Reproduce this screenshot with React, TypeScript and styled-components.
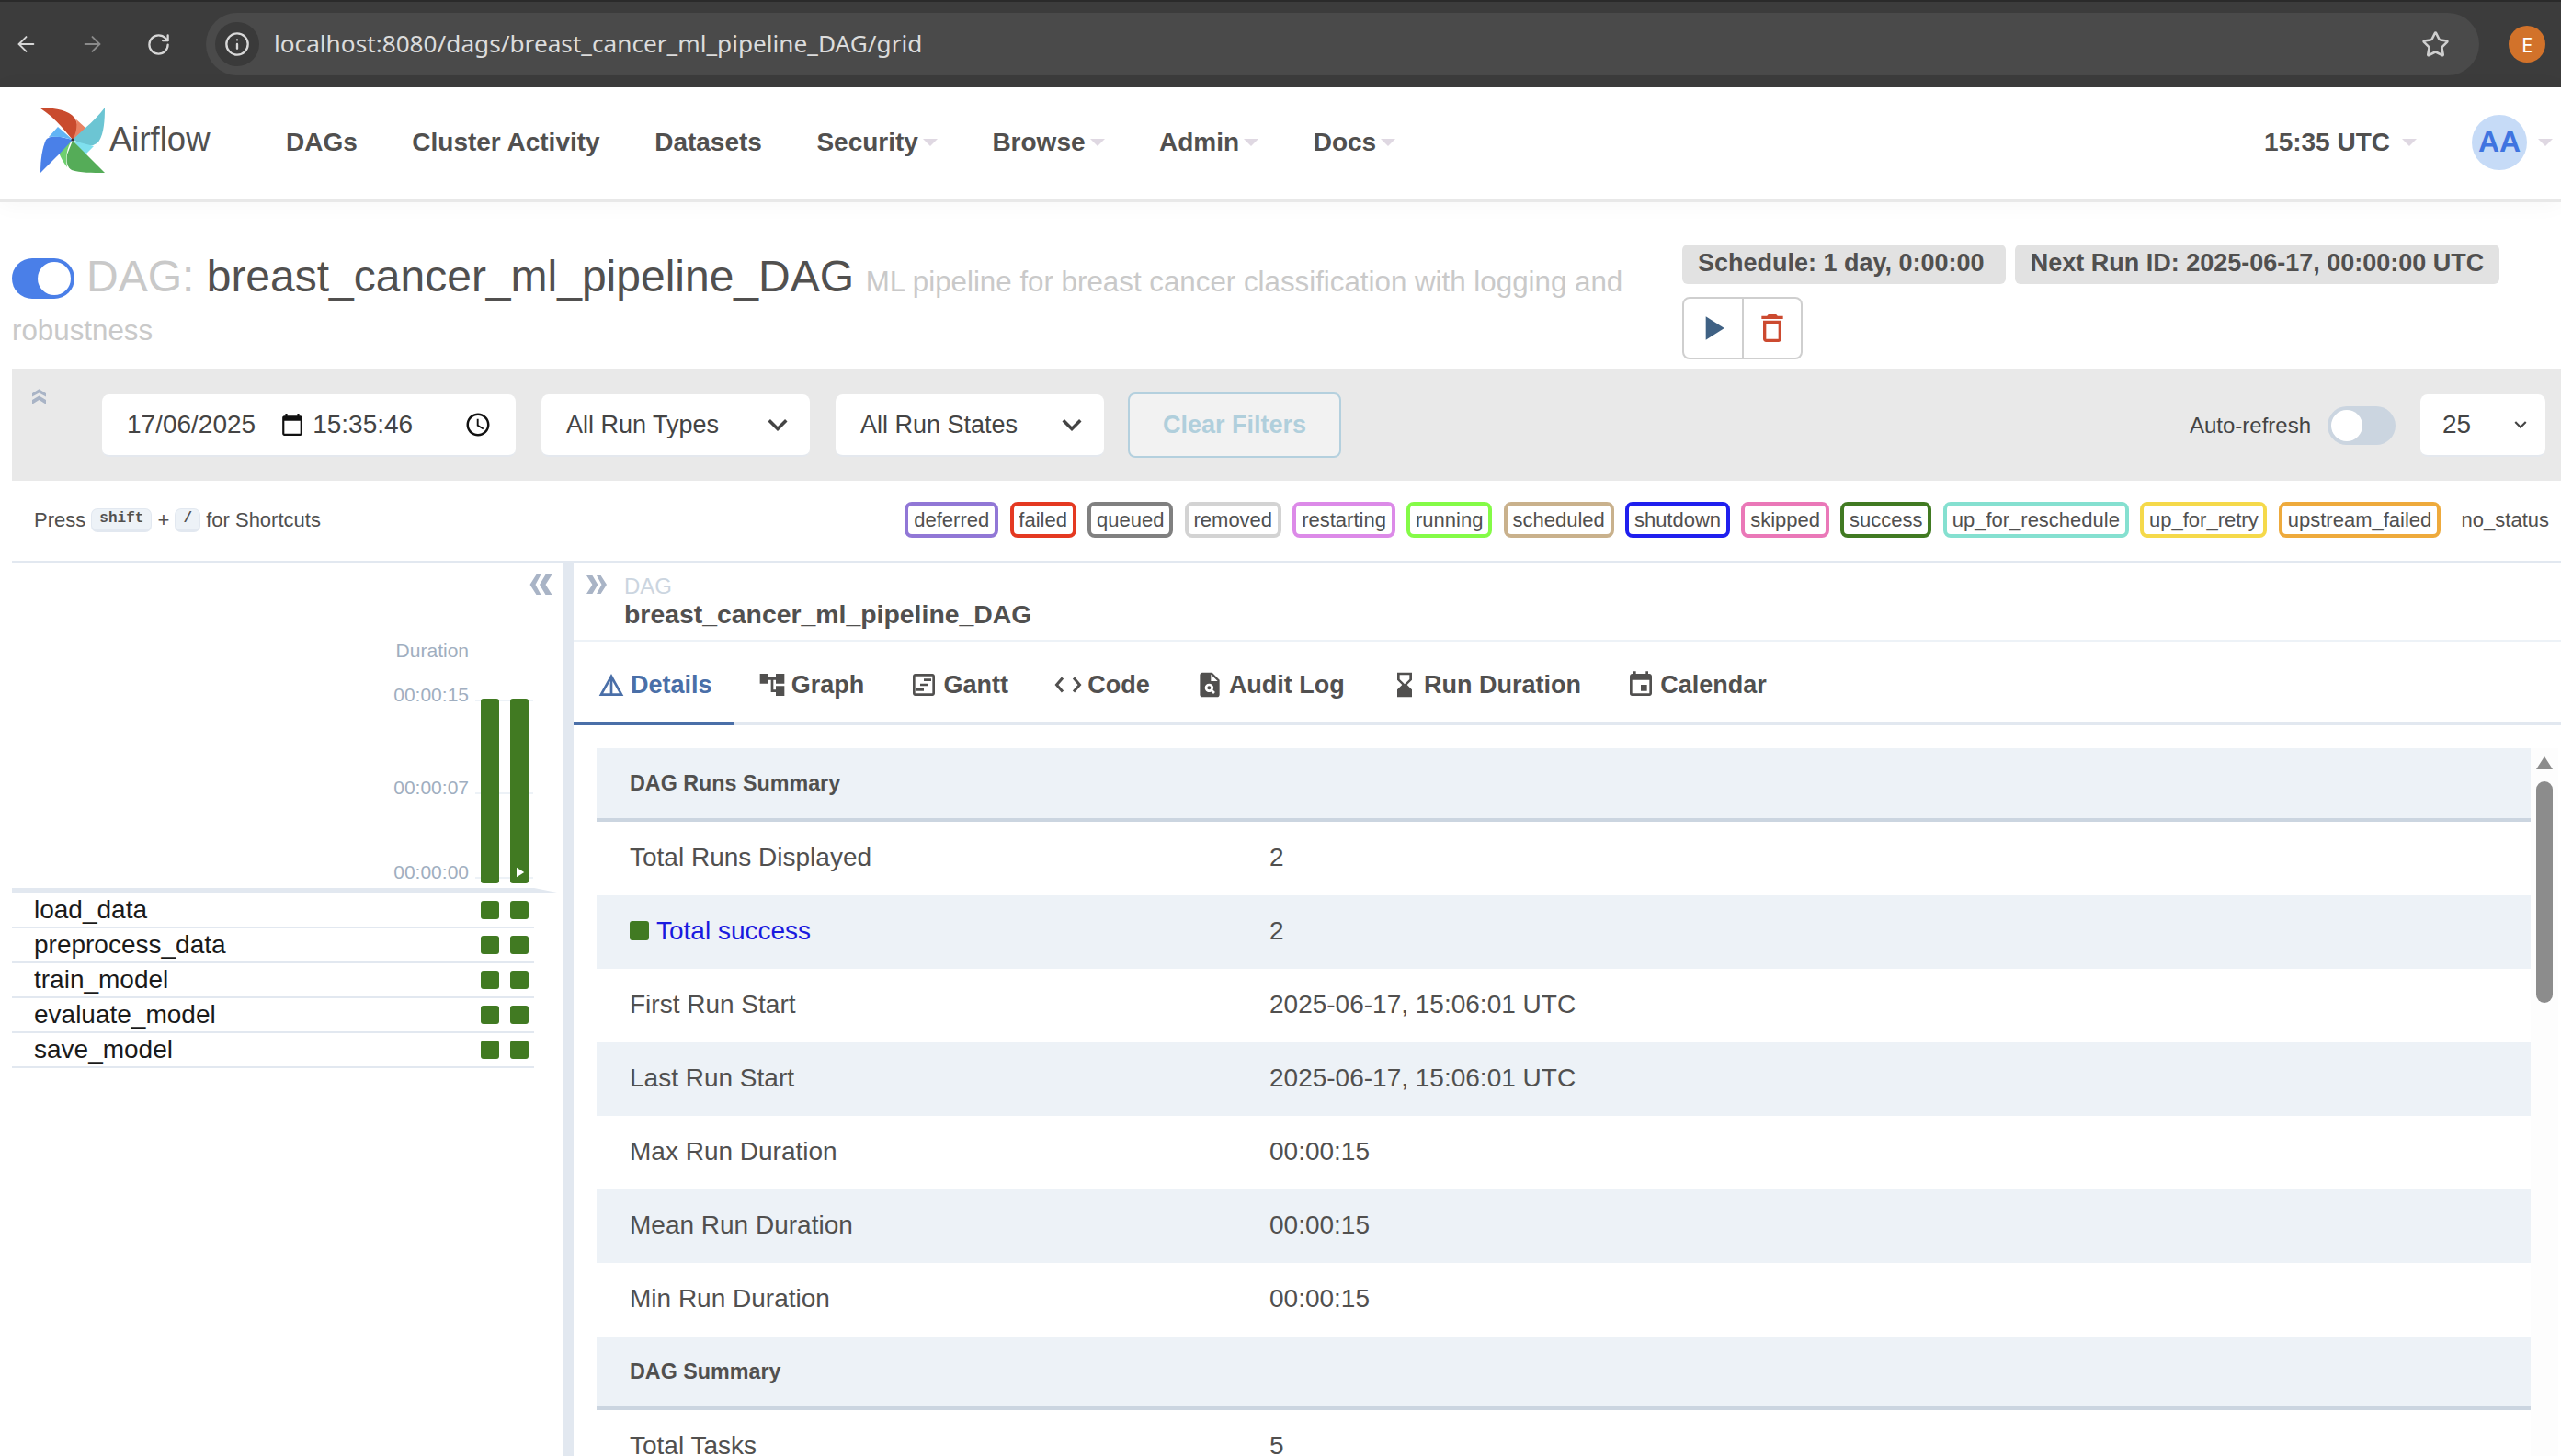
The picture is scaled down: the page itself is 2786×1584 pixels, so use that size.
import React from "react";
import styled, { createGlobalStyle } from "styled-components";
import { ArrowLeft, ArrowRight, Info, RotateCw, Star } from "lucide-react";
import {
  MdAccountTree,
  MdCalendarToday,
  MdDeleteOutline,
  MdDetails,
  MdEvent,
  MdExpandMore,
  MdHourglassBottom,
  MdOutlineAccessTime,
  MdOutlineViewTimeline,
  MdPlagiarism,
  MdPlayArrow,
} from "react-icons/md";

const navItems = [
  { label: "DAGs" },
  { label: "Cluster Activity" },
  { label: "Datasets" },
  { label: "Security", menu: true },
  { label: "Browse", menu: true },
  { label: "Admin", menu: true },
  { label: "Docs", menu: true },
];

const legend = [
  ["deferred", "#9177d6"],
  ["failed", "#e43921"],
  ["queued", "#808080"],
  ["removed", "#d3d3d3"],
  ["restarting", "#dc8ae8"],
  ["running", "#84fb47"],
  ["scheduled", "#c9b18c"],
  ["shutdown", "#1f1fee"],
  ["skipped", "#ea78b8"],
  ["success", "#417a22"],
  ["up_for_reschedule", "#85e0d0"],
  ["up_for_retry", "#f5d94a"],
  ["upstream_failed", "#eeaa3c"],
];

const tasks = ["load_data", "preprocess_data", "train_model", "evaluate_model", "save_model"];

const CodeIcon = () => (
  <svg width="32" height="32" viewBox="0 0 32 32" fill="none" stroke="currentColor" strokeWidth="3">
    <path d="M10 8.500 3.500 16l6.500 7.500" />
    <path d="M22 8.500 28.500 16 22 23.500" />
  </svg>
);

const tabs = [
  { label: "Details", icon: <MdDetails size={32} />, active: true },
  { label: "Graph", icon: <MdAccountTree size={32} /> },
  { label: "Gantt", icon: <MdOutlineViewTimeline size={32} /> },
  { label: "Code", icon: <CodeIcon /> },
  { label: "Audit Log", icon: <MdPlagiarism size={32} /> },
  { label: "Run Duration", icon: <MdHourglassBottom size={32} /> },
  { label: "Calendar", icon: <MdEvent size={32} /> },
];

const runRows = [
  ["Total Runs Displayed", "2"],
  ["Total success", "2"],
  ["First Run Start", "2025-06-17, 15:06:01 UTC"],
  ["Last Run Start", "2025-06-17, 15:06:01 UTC"],
  ["Max Run Duration", "00:00:15"],
  ["Mean Run Duration", "00:00:15"],
  ["Min Run Duration", "00:00:15"],
];

const AirflowLogo = () => (
  <svg width="71" height="71" viewBox="13 10 71 71">
    <path d="M13.5 10.5C28 10 44 12 51 21c4 6 4 13 3 18l-5 6-12-14C30 23 22 16 13.5 10.5Z" fill="#c94b2e" />
    <path d="M53 23l11 10-15 12c4-7 5-14 4-22Z" fill="#e88263" />
    <path d="M84 10c0 14-1 28-6 36-4 6-11 6-16 5l-13-6 14-13C70 26 78 18 84 10Z" fill="#6cc5d3" />
    <path d="M49 46l23 6-9 9C58 56 53 50 49 46Z" fill="#7fe0ee" />
    <path d="M84 81c-14 0-27 0-36-3-5-3-6-9-5-17l6-15 14 14c7 7 14 14 21 21Z" fill="#55ac58" />
    <path d="M34 59l10-10 4-3c-5 8-7 17-5 29-4-5-7-11-9-16Z" fill="#6fcf6f" />
    <path d="M14 81c0-15 2-27 6-36 3-4 10-4 16-3l13 3-14 15C27 68 20 75 14 81Z" fill="#4a80e8" />
    <path d="M23 42l10-11 16 14c-9-3-17-4-26-3Z" fill="#62b4f5" />
    <circle cx="49" cy="45" r="1.6" fill="#333" />
  </svg>
);

// double chevron pointing left, turned for the other directions
const DoubleChevron = ({ width, height, turn }: { width: number; height: number; turn: number }) => (
  <svg width={width} height={height} viewBox="0 0 24 22" style={{ transform: `rotate(${turn}deg)` }}>
    <path d="M12 0H7L0 11l7 11h5L6 11Z" fill="currentColor" />
    <path d="M24 0h-7l-6.500 11L17 22h7l-7-11Z" fill="currentColor" />
  </svg>
);

const App = () => {
  return (
    <Page>
      <GlobalStyle />
      <BrowserBar>
        <BrowserIcon $dim={false}><ArrowLeft size={36} strokeWidth={1.7} /></BrowserIcon>
        <BrowserIcon $dim><ArrowRight size={36} strokeWidth={1.7} /></BrowserIcon>
        <BrowserIcon $dim={false}><RotateCw size={29} /></BrowserIcon>
        <UrlPill>
          <InfoBadge><Info size={28} /></InfoBadge>
          <UrlText>localhost:8080/dags/breast_cancer_ml_pipeline_DAG/grid</UrlText>
          <Star size={31} color="#cfcfcf" strokeWidth={2} />
        </UrlPill>
        <ProfileDot>E</ProfileDot>
      </BrowserBar>

      <NavBar>
        <Brand>
          <AirflowLogo />
          <BrandName>Airflow</BrandName>
        </Brand>
        <NavList>
          {navItems.map((item) => (
            <NavItem key={item.label}>
              {item.label}
              {item.menu && <Caret />}
            </NavItem>
          ))}
        </NavList>
        <NavRight>
          <NavClock>
            15:35 UTC
            <Caret />
          </NavClock>
          <UserDot>AA</UserDot>
          <Caret />
        </NavRight>
      </NavBar>

      <TitleArea>
        <Title>
          <PauseToggle />
          <DagPrefix>DAG: </DagPrefix>
          <DagName>breast_cancer_ml_pipeline_DAG</DagName>{" "}
          <DagDescription>ML pipeline for breast cancer classification with logging and robustness</DagDescription>
        </Title>
        <TitleSide>
          <BadgeRow>
            <InfoChip>Schedule: 1 day, 0:00:00</InfoChip>
            <InfoChip>Next Run ID: 2025-06-17, 00:00:00 UTC</InfoChip>
          </BadgeRow>
          <ButtonGroup>
            <ActionButton $color="#3f6184"><MdPlayArrow size={44} /></ActionButton>
            <ActionButton $color="#cc4a30"><MdDeleteOutline size={40} /></ActionButton>
          </ButtonGroup>
        </TitleSide>
      </TitleArea>

      <FilterBar>
        <CollapseUp><DoubleChevron width={17} height={15} turn={90} /></CollapseUp>
        <DateField>
          <span>17/06/2025</span>
          <MdCalendarToday size={26} color="#111" />
          <span>15:35:46</span>
          <ClockSlot><MdOutlineAccessTime size={30} color="#111" /></ClockSlot>
        </DateField>
        <SelectField>
          All Run Types
          <MdExpandMore size={42} color="#444" />
        </SelectField>
        <SelectField>
          All Run States
          <MdExpandMore size={42} color="#444" />
        </SelectField>
        <ClearButton>Clear Filters</ClearButton>
        <RefreshGroup>
          <RefreshLabel>Auto-refresh</RefreshLabel>
          <RefreshToggle><ToggleKnob /></RefreshToggle>
          <PageSize>
            25
            <MdExpandMore size={26} color="#444" />
          </PageSize>
        </RefreshGroup>
      </FilterBar>

      <LegendRow>
        <Shortcuts>
          Press <Kbd>shift</Kbd> + <Kbd>/</Kbd> for Shortcuts
        </Shortcuts>
        <LegendList>
          {legend.map(([name, color]) => (
            <LegendBadge key={name} $color={color}>{name}</LegendBadge>
          ))}
          <NoStatus>no_status</NoStatus>
        </LegendList>
      </LegendRow>

      <Main>
        <GridPanel>
          <PanelTop><DoubleChevron width={25} height={22} turn={0} /></PanelTop>
          <DurationLabel>Duration</DurationLabel>
          <Chart>
            <TickRow $gap={0}><TickLabel>00:00:15</TickLabel><TickLine /></TickRow>
            <TickRow $gap={75}><TickLabel>00:00:07</TickLabel><TickLine /></TickRow>
            <TickRow $gap={66}><TickLabel>00:00:00</TickLabel><TickLine /></TickRow>
            <Bars>
              <Bar />
              <Bar><MdPlayArrow size={18} color="#fff" /></Bar>
            </Bars>
          </Chart>
          <ChartFloor />
          {tasks.map((task) => (
            <TaskRow key={task}>
              {task}
              <TaskCells>
                <TaskCell />
                <TaskCell />
              </TaskCells>
            </TaskRow>
          ))}
        </GridPanel>
        <Divider />
        <DetailPanel>
          <Crumbs>
            <ExpandIcon><DoubleChevron width={22} height={22} turn={180} /></ExpandIcon>
            <CrumbText>
              <CrumbLabel>DAG</CrumbLabel>
              <CrumbValue>breast_cancer_ml_pipeline_DAG</CrumbValue>
            </CrumbText>
          </Crumbs>
          <TabStrip>
            {tabs.map((tab) => (
              <Tab key={tab.label} $active={!!tab.active}>
                {tab.icon}
                {tab.label}
              </Tab>
            ))}
          </TabStrip>
          <DetailBody>
            <SummaryTable>
              <SectionHead>DAG Runs Summary</SectionHead>
              {runRows.map(([label, value], i) => (
                <SummaryRow key={label} $shaded={i % 2 === 1}>
                  {label === "Total success" ? (
                    <SuccessLink><SuccessSquare />{label}</SuccessLink>
                  ) : (
                    <span>{label}</span>
                  )}
                  <span>{value}</span>
                </SummaryRow>
              ))}
              <SectionHead>DAG Summary</SectionHead>
              <SummaryRow $shaded={false}>
                <span>Total Tasks</span>
                <span>5</span>
              </SummaryRow>
            </SummaryTable>
            <ScrollTrack>
              <ScrollArrow />
              <ScrollThumb />
            </ScrollTrack>
          </DetailBody>
        </DetailPanel>
      </Main>
    </Page>
  );
};

export default App;

const GlobalStyle = createGlobalStyle`
  html, body {
    margin: 0;
    height: 100%;
    overflow: hidden;
    background: #fff;
    font-family: "Liberation Sans", Arial, sans-serif;
    color: #51504f;
  }
  * { box-sizing: border-box; }
`;

const Page = styled.div`
  display: flex;
  flex-direction: column;
  width: 2786px;
  height: 1584px;
  overflow: hidden;
`;

const BrowserBar = styled.div`
  display: flex;
  align-items: center;
  flex: none;
  height: 95px;
  padding: 0 17px 1px 15px;
  background: #3c3c3c;
  border-top: 2px solid #2a2a2a;
`;

const BrowserIcon = styled.div<{ $dim: boolean }>`
  display: flex;
  justify-content: center;
  width: 27px;
  margin-right: 45px;
  color: ${(p) => (p.$dim ? "#8a8a8a" : "#d6d6d6")};
`;

const UrlPill = styled.div`
  display: flex;
  align-items: center;
  width: 2478px;
  height: 68px;
  margin-left: -7px;
  padding: 0 32px 0 10px;
  border-radius: 34px;
  background: #4a4a4a;
  color: #d8d8d8;
`;

const InfoBadge = styled.div`
  display: flex;
  align-items: center;
  justify-content: center;
  flex: none;
  width: 48px;
  height: 48px;
  border-radius: 50%;
  background: #3a3a3a;
`;

const UrlText = styled.div`
  flex: 1;
  margin: -2px 0 0 16px;
  font-family: "Noto Sans", sans-serif;
  font-size: 26.2px;
  color: #dcdcdc;
`;

const ProfileDot = styled.div`
  display: flex;
  align-items: center;
  justify-content: center;
  width: 40px;
  height: 40px;
  margin-left: 32px;
  border-radius: 50%;
  background: #d2722a;
  color: #fff;
  font-family: "Noto Sans", sans-serif;
  font-size: 22px;
`;

const NavBar = styled.header`
  display: flex;
  align-items: center;
  flex: none;
  height: 125px;
  padding: 0 9px 3px 43px;
  background: #fff;
  border-bottom: 3px solid #e8e8e8;
  box-shadow: 0 2px 24px rgba(0, 0, 0, 0.04);
`;

const Brand = styled.div`
  display: flex;
  align-items: center;
  width: 268px;
  margin-top: -5px;
`;

const BrandName = styled.span`
  margin-left: 5px;
  font-size: 36.5px;
  color: #51504f;
`;

const NavList = styled.nav`
  display: flex;
  align-items: center;
  gap: 59.5px;
`;

const NavItem = styled.span`
  display: flex;
  align-items: center;
  font-size: 28px;
  font-weight: 700;
  color: #51504f;
`;

const Caret = styled.i`
  display: inline-block;
  width: 0;
  height: 0;
  margin-left: 5px;
  border-top: 8px solid #dfd8e2;
  border-left: 8px solid transparent;
  border-right: 8px solid transparent;
`;

const NavRight = styled.div`
  display: flex;
  align-items: center;
  margin-left: auto;
`;

const NavClock = styled.span`
  display: flex;
  align-items: center;
  gap: 8px;
  font-size: 28px;
  font-weight: 700;
`;

const UserDot = styled.div`
  display: flex;
  align-items: center;
  justify-content: center;
  width: 60px;
  height: 60px;
  margin: 0 7px 0 60px;
  border-radius: 50%;
  background: #c6dbf7;
  color: #3f74e0;
  font-size: 32px;
  font-weight: 700;
`;

const TitleArea = styled.section`
  display: flex;
  flex: none;
  height: 181px;
  padding-left: 13px;
`;

const Title = styled.h1`
  width: 1790px;
  margin: 54px 27px 0 0;
  font-size: 31.3px;
  font-weight: 400;
  line-height: 53px;
`;

const PauseToggle = styled.span`
  display: inline-block;
  position: relative;
  width: 68px;
  height: 44px;
  margin-right: 13px;
  vertical-align: -8px;
  border-radius: 22px;
  background: #4a7fe8;

  &::after {
    content: "";
    position: absolute;
    top: 4px;
    right: 4px;
    width: 36px;
    height: 36px;
    border-radius: 50%;
    background: #fff;
  }
`;

const DagPrefix = styled.span`
  font-size: 48px;
  color: #c9c9c9;
`;

const DagName = styled.span`
  font-size: 48px;
  color: #51504f;
`;

const DagDescription = styled.span`
  margin-left: 4px;
  color: #c9c9c9;
`;

const TitleSide = styled.div`
  display: flex;
  flex-direction: column;
  align-items: flex-start;
  padding-top: 46px;
`;

const BadgeRow = styled.div`
  display: flex;
  gap: 10px;
`;

const InfoChip = styled.span`
  display: flex;
  align-items: center;
  height: 43px;
  padding: 0 23px 3px 17px;
  border-radius: 6px;
  background: #e2e2e2;
  font-size: 27px;
  font-weight: 700;
  white-space: nowrap;

  &:last-child {
    padding-right: 17px;
  }
`;

const ButtonGroup = styled.div`
  display: flex;
  width: 131px;
  height: 68px;
  margin-top: 14px;
  border: 2px solid #cfcfcf;
  border-radius: 8px;
`;

const ActionButton = styled.div<{ $color: string }>`
  display: flex;
  align-items: center;
  justify-content: center;
  flex: 1;
  color: ${(p) => p.$color};

  & + & {
    border-left: 2px solid #cfcfcf;
  }
`;

const FilterBar = styled.section`
  display: flex;
  align-items: flex-start;
  flex: none;
  height: 122px;
  margin-left: 13px;
  padding: 28px 17px 0 0;
  background: #e9e9e9;
  font-size: 27px;
  color: #444;
`;

const CollapseUp = styled.div`
  display: flex;
  width: 98px;
  margin-top: -5px;
  padding-left: 21px;
  color: #a9b4c6;
`;

const inputBox = `
  display: flex;
  align-items: center;
  height: 68px;
  border-radius: 8px;
  background: #fff;
  border-bottom: 2px solid #e4e8ee;
`;

const DateField = styled.div`
  ${inputBox}
  width: 450px;
  margin-right: 28px;
  padding-left: 27px;
  gap: 27px;
  font-size: 28px;

  span + svg + span {
    margin-left: -18px;
  }
`;

const ClockSlot = styled.div`
  display: flex;
  margin-left: 29px;
`;

const SelectField = styled.div`
  ${inputBox}
  justify-content: space-between;
  width: 292px;
  margin-right: 28px;
  padding: 0 14px 0 27px;
`;

const ClearButton = styled.div`
  display: flex;
  align-items: center;
  justify-content: center;
  width: 232px;
  height: 71px;
  margin: -2px 0 0 -2px;
  border: 2px solid #b4d0de;
  border-radius: 8px;
  background: #f2f2f2;
  color: #b0cfdc;
  font-weight: 700;
`;

const RefreshGroup = styled.div`
  display: flex;
  align-items: center;
  height: 68px;
  margin-left: auto;
`;

const RefreshLabel = styled.span`
  font-size: 24px;
`;

const RefreshToggle = styled.div`
  width: 74px;
  height: 42px;
  margin: 0 27px 0 18px;
  padding: 4px;
  border-radius: 21px;
  background: #cbd5e0;
`;

const ToggleKnob = styled.div`
  width: 34px;
  height: 34px;
  border-radius: 50%;
  background: #fff;
`;

const PageSize = styled.div`
  ${inputBox}
  justify-content: space-between;
  width: 136px;
  padding: 0 14px 0 24px;
  font-size: 28px;
`;

const LegendRow = styled.section`
  display: flex;
  align-items: center;
  justify-content: space-between;
  flex: none;
  height: 89px;
  margin-left: 13px;
  padding: 0 13px 2px 24px;
  border-bottom: 2px solid #e2e8f0;
  font-size: 22px;
  color: #51504f;
`;

const Shortcuts = styled.div`
  display: flex;
  align-items: center;
  white-space: pre;
`;

const Kbd = styled.kbd`
  padding: 1px 8px 3px;
  border: 1px solid #e2e8f0;
  border-bottom-width: 3px;
  border-radius: 7px;
  background: #edf2f7;
  font-family: "Liberation Mono", monospace;
  font-size: 16px;
  font-weight: 700;
`;

const LegendList = styled.div`
  display: flex;
  align-items: center;
  gap: 12.5px;
`;

const LegendBadge = styled.span<{ $color: string }>`
  display: flex;
  align-items: center;
  height: 39px;
  padding: 0 5.8px;
  border: 4px solid ${(p) => p.$color};
  border-radius: 8px;
`;

const NoStatus = styled.span`
  margin-left: 10px;
`;

const Main = styled.main`
  display: flex;
  flex: 1;
  min-height: 0;
  margin-left: 13px;
`;

const GridPanel = styled.div`
  flex: none;
  width: 600px;
`;

const PanelTop = styled.div`
  display: flex;
  justify-content: flex-end;
  height: 82px;
  padding: 13px 12px 0 0;
  color: #a9b4c6;
`;

const DurationLabel = styled.div`
  width: 497px;
  height: 50px;
  padding-top: 2px;
  font-size: 21px;
  text-align: right;
  color: #a0aec0;
`;

const Chart = styled.div`
  position: relative;
  height: 222px;
`;

const TickRow = styled.div<{ $gap: number }>`
  display: flex;
  align-items: center;
  height: 26px;
  margin-top: ${(p) => p.$gap}px;
`;

const TickLabel = styled.span`
  width: 497px;
  margin-top: -2px;
  font-size: 21px;
  text-align: right;
  color: #a0aec0;
`;

const TickLine = styled.span`
  width: 63px;
  height: 2px;
  margin: 10px 0 0 7px;
  background: #edf2f7;
`;

const Bars = styled.div`
  position: absolute;
  top: 16px;
  left: 510px;
  display: flex;
  gap: 12px;
`;

const Bar = styled.div`
  display: flex;
  align-items: flex-end;
  justify-content: center;
  width: 20px;
  height: 201px;
  padding-bottom: 3px;
  border-radius: 3px;
  background: #417a22;
`;

const ChartFloor = styled.div`
  width: 598px;
  height: 6px;
  clip-path: polygon(0 0, 568px 0, 100% 100%, 0 100%);
  background: #e2e8f0;
`;

const TaskRow = styled.div`
  display: flex;
  align-items: center;
  justify-content: space-between;
  width: 568px;
  height: 38px;
  padding: 0 6px 0 24px;
  border-bottom: 2px solid #e2e8f0;
  font-size: 28px;
  color: #1a1a1a;
`;

const TaskCells = styled.div`
  display: flex;
  gap: 12px;
`;

const TaskCell = styled.div`
  width: 20px;
  height: 20px;
  border-radius: 3px;
  background: #417a22;
`;

const Divider = styled.div`
  flex: none;
  width: 11px;
  background: #e2e8f0;
`;

const DetailPanel = styled.div`
  display: flex;
  flex: 1;
  flex-direction: column;
  min-width: 0;
`;

const Crumbs = styled.div`
  display: flex;
  flex: none;
  height: 86px;
  padding: 12px 0 0 14px;
  border-bottom: 2px solid #edf2f7;
`;

const ExpandIcon = styled.div`
  width: 33px;
  padding-top: 1px;
  color: #a9b4c6;
`;

const CrumbText = styled.div`
  display: flex;
  flex-direction: column;
  margin-left: 8px;
`;

const CrumbLabel = styled.span`
  font-size: 24px;
  color: #cbd5e0;
`;

const CrumbValue = styled.span`
  font-size: 28.4px;
  font-weight: 700;
`;

const TabStrip = styled.div`
  display: flex;
  flex: none;
  height: 91px;
  border-bottom: 4px solid #e2e8f0;
`;

const Tab = styled.div<{ $active: boolean }>`
  display: flex;
  align-items: center;
  gap: 5px;
  height: 91px;
  margin-right: -0.3px;
  padding: 7px 24.5px 0 25px;
  border-bottom: 4px solid ${(p) => (p.$active ? "#4a6fa8" : "transparent")};
  color: ${(p) => (p.$active ? "#4a6fa8" : "#51504f")};
  font-size: 27px;
  font-weight: 700;
`;

const DetailBody = styled.div`
  display: flex;
  flex: 1;
  min-height: 0;
  padding: 25px 3px 0 25px;
`;

const SummaryTable = styled.div`
  flex: 1;
  min-width: 0;
`;

const SectionHead = styled.div`
  display: flex;
  align-items: center;
  height: 80px;
  padding: 0 36px;
  border-bottom: 4px solid #cbd5e0;
  background: #edf2f7;
  font-size: 23.3px;
  font-weight: 700;
`;

const SummaryRow = styled.div<{ $shaded: boolean }>`
  display: grid;
  grid-template-columns: 696px 1fr;
  align-items: center;
  height: 80px;
  padding: 0 0 3px 36px;
  background: ${(p) => (p.$shaded ? "#edf2f7" : "#fff")};
  font-size: 28px;
`;

const SuccessLink = styled.span`
  display: flex;
  align-items: center;
  gap: 8px;
  color: #1a1adf;
`;

const SuccessSquare = styled.i`
  width: 21px;
  height: 21px;
  border-radius: 3px;
  background: #417a22;
`;

const ScrollTrack = styled.div`
  display: flex;
  flex: none;
  flex-direction: column;
  align-items: center;
  width: 30px;
  padding-top: 9px;
  background: #fdfdfd;
`;

const ScrollArrow = styled.i`
  width: 0;
  height: 0;
  border-bottom: 14px solid #8c8c8c;
  border-left: 9px solid transparent;
  border-right: 9px solid transparent;
`;

const ScrollThumb = styled.div`
  width: 18px;
  height: 241px;
  margin-top: 13px;
  border-radius: 9px;
  background: #8c8c8c;
`;
